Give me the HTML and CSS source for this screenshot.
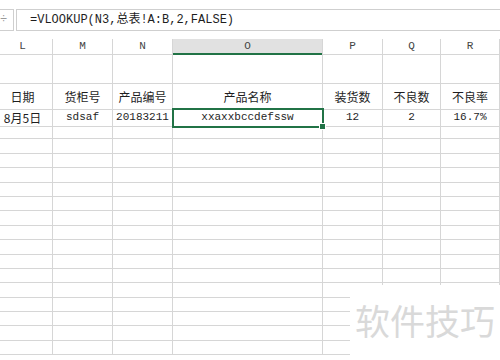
FILE: index.html
```html
<!DOCTYPE html>
<html lang="zh-CN">
<head>
  <meta charset="UTF-8">
  <meta name="viewport" content="width=device-width, initial-scale=1.0">
  <title>VLOOKUP</title>
  <link rel="stylesheet" href="styles.css">
</head>
<body>

  <div class="formula-bar">
    <div class="name-box">÷</div>
    <div class="formula">=VLOOKUP(N3,总表!A:B,2,FALSE)</div>
  </div>

  <div class="sheet">
    <div class="row col-head">
      <span>L</span><span>M</span><span>N</span><span class="active">O</span><span>P</span><span>Q</span><span>R</span>
    </div>
    <div class="row tall">
      <span></span><span></span><span></span><span></span><span></span><span></span><span></span>
    </div>
    <div class="row title">
      <span>日期</span><span>货柜号</span><span>产品编号</span><span>产品名称</span><span>装货数</span><span>不良数</span><span>不良率</span>
    </div>
    <div class="row data">
      <span class="cjk">8月5日</span><span>sdsaf</span><span>20183211</span><span class="selected">xxaxxbccdefssw</span><span>12</span><span>2</span><span>16.7%</span>
    </div>
    <div class="row"><span></span><span></span><span></span><span></span><span></span><span></span><span></span></div>
    <div class="row"><span></span><span></span><span></span><span></span><span></span><span></span><span></span></div>
    <div class="row"><span></span><span></span><span></span><span></span><span></span><span></span><span></span></div>
    <div class="row"><span></span><span></span><span></span><span></span><span></span><span></span><span></span></div>
    <div class="row"><span></span><span></span><span></span><span></span><span></span><span></span><span></span></div>
    <div class="row"><span></span><span></span><span></span><span></span><span></span><span></span><span></span></div>
    <div class="row"><span></span><span></span><span></span><span></span><span></span><span></span><span></span></div>
    <div class="row"><span></span><span></span><span></span><span></span><span></span><span></span><span></span></div>
    <div class="row"><span></span><span></span><span></span><span></span><span></span><span></span><span></span></div>
    <div class="row"><span></span><span></span><span></span><span></span><span></span><span></span><span></span></div>
    <div class="row"><span></span><span></span><span></span><span></span><span></span><span></span><span></span></div>
    <div class="row"><span></span><span></span><span></span><span></span><span></span><span></span><span></span></div>
    <div class="row"><span></span><span></span><span></span><span></span><span></span><span></span><span></span></div>
    <div class="row"><span></span><span></span><span></span><span></span><span></span><span></span><span></span></div>
    <div class="row"><span></span><span></span><span></span><span></span><span></span><span></span><span></span></div>
    <div class="row"><span></span><span></span><span></span><span></span><span></span><span></span><span></span></div>
  </div>

  <div class="watermark">软件技巧</div>

</body>
</html>
```

FILE: styles.css
```css
body {
  margin: 0;
  background: #fff;
  width: 500px;
  height: 360px;
  overflow: hidden;
  position: relative;
  font-family: "Liberation Mono", "Noto Sans CJK SC", monospace;
  color: #1e1e1e;
}

.formula-bar {
  display: flex;
  padding-top: 9px;
  height: 22px;
  margin-bottom: 8px;
}

.name-box {
  width: 13px;
  border: 1px solid #cfcfcf;
  border-left: none;
  margin-right: 2px;
  color: #9a9a9a;
  font-size: 12px;
  line-height: 20px;
}

.formula {
  flex: 1;
  border: 1px solid #cfcfcf;
  border-right: none;
  padding-left: 13px;
  font-size: 12px;
  line-height: 21px;
  white-space: nowrap;
}

.sheet {
  margin-left: -7px;
}

.row {
  display: grid;
  grid-template-columns: 60px 60px 60px 150px 60px 58px 1fr;
  height: 14.4px;
}

.row span {
  box-sizing: border-box;
  border-right: 1px solid #d6d6d6;
  border-bottom: 1px solid #d6d6d6;
  text-align: center;
  white-space: nowrap;
}

.col-head {
  height: 14px;
}

.col-head span {
  font-size: 11px;
  line-height: 14px;
  color: #444;
}

.col-head .active {
  background: #e1e1e1;
  border-bottom: 2px solid #217346;
}

.tall {
  height: 31px;
}

.title {
  height: 25px;
}

.title span {
  font-family: "Noto Sans CJK SC", sans-serif;
  font-size: 12px;
  line-height: 25px;
}

.data {
  height: 16px;
}

.data span {
  font-size: 11px;
  line-height: 17px;
}

.data .cjk {
  font-family: "Noto Sans CJK SC", sans-serif;
  font-size: 12px;
}

.data .selected {
  position: relative;
}

.data .selected::before {
  content: "";
  position: absolute;
  left: -1px;
  top: -1px;
  right: -2px;
  bottom: -2px;
  border: 2px solid #217346;
}

.data .selected::after {
  content: "";
  position: absolute;
  right: -4px;
  bottom: -4px;
  width: 5px;
  height: 5px;
  background: #217346;
  border: 1px solid #fff;
}

.watermark {
  position: absolute;
  left: 350px;
  top: 285px;
  width: 145px;
  height: 75px;
  padding-left: 5px;
  background: #fff;
  font-family: "Noto Sans CJK SC", sans-serif;
  font-size: 35px;
  line-height: 70px;
  color: #d9d9d9;
  white-space: nowrap;
}
```
